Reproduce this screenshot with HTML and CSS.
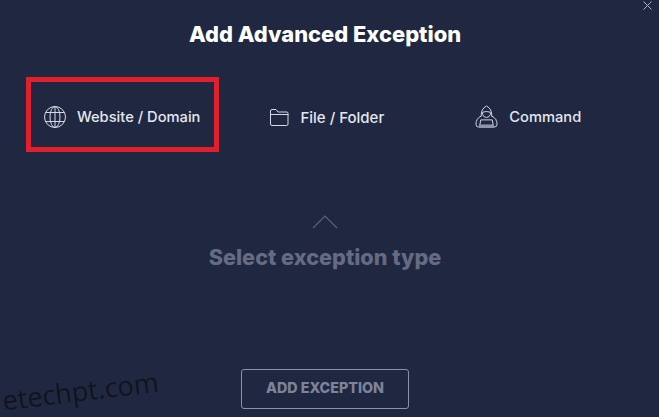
FILE: index.html
```html
<!DOCTYPE html>
<html lang="en">
<head>
    <meta charset="UTF-8">
    <meta name="viewport" content="width=device-width, initial-scale=1.0">
    <title>Add Advanced Exception</title>
    <link rel="stylesheet" href="styles.css">
</head>
<body>
    <div class="dialog">
        <svg class="close" width="9" height="9" viewBox="0 0 9 9">
            <path d="M.5.5l8 8M8.5.5l-8 8" />
        </svg>

        <h1 class="title">Add Advanced Exception</h1>

        <div class="tabs">
            <div class="tab tab-site">
                <svg width="22" height="22" viewBox="0 0 22 22">
                    <circle cx="11" cy="11" r="10.500" />
                    <ellipse cx="11" cy="11" rx="5" ry="10.500" />
                    <path d="M11 .5v21M1.800 6.500h18.400M1.800 15.500h18.400" />
                </svg>
                <span>Website / Domain</span>
            </div>
            <div class="tab tab-file">
                <svg width="19" height="17" viewBox="0 0 19 17">
                    <path d="M.5 15V2q0-1.500 1.500-1.500h4l2 2.500h9q1 0 1 1.500V15q0 1.500-1.500 1.500H2Q.5 16.500.5 15z" />
                    <path d="M.5 5.500h18" />
                </svg>
                <span>File / Folder</span>
            </div>
            <div class="tab tab-cmd">
                <svg width="23" height="24" viewBox="0 0 24 25">
                    <path d="M6.500 12Q6 4 12 1q6 3 5.500 11" />
                    <path d="M8 7.500q4-1.500 8 0v2.500q-1 3-4 3t-4-3z" />
                    <path d="M6.500 11.500Q1 14 1 20q0 3 3 3M17.500 11.500Q23 14 23 20q0 3-3 3" />
                    <path d="M6 15.500h12l1 5.500H5z" />
                    <path class="base" d="M4 21h16v3H4z" />
                </svg>
                <span>Command</span>
            </div>
        </div>

        <div class="highlight"></div>

        <div class="empty">
            <svg width="26" height="14" viewBox="0 0 26 14">
                <path d="M1 13L13 1l12 12" />
            </svg>
            <p>Select exception type</p>
        </div>

        <button class="add-btn">ADD EXCEPTION</button>

        <div class="watermark">etechpt.com</div>
    </div>
</body>
</html>
```

FILE: styles.css
```css
* {
    margin: 0;
    padding: 0;
    box-sizing: border-box;
    font-family: Inter, 'Liberation Sans', sans-serif;
}

body {
    background: #1f2840;
    width: 659px;
    height: 417px;
    overflow: hidden;
}

.dialog {
    position: relative;
    height: 417px;
    display: flex;
    flex-direction: column;
    align-items: center;
    padding: 21px 9px 0 0;
}

.close {
    position: absolute;
    top: 1px;
    right: 7px;
    fill: none;
    stroke: #aab2cc;
    stroke-width: 1;
}

.title {
    font-size: 21.900px;
    line-height: 26px;
    font-weight: 800;
    color: #fff;
}

.tabs {
    width: 100%;
    display: flex;
    align-items: center;
    height: 26px;
    margin-top: 57px;
    padding-left: 44px;
}

.tab {
    display: flex;
    align-items: center;
    gap: 11px;
    color: #e4e7f0;
    font-size: 14.700px;
    font-weight: 500;
}

.tab svg {
    fill: none;
    stroke: #d5d9e6;
    stroke-width: 1;
}

.tab svg .base {
    fill: #9096aa;
    stroke: none;
}

.tab-file {
    margin-left: 70px;
}

.tab-file span {
    font-size: 15px;
}

.tab-cmd {
    margin-left: 91px;
}

.highlight {
    position: absolute;
    left: 26px;
    top: 77px;
    width: 193px;
    height: 75px;
    border: 5px solid #e0202c;
}

.empty {
    margin-top: 85px;
    display: flex;
    flex-direction: column;
    align-items: center;
    gap: 15px;
}

.empty svg {
    fill: none;
    stroke: #5a6178;
    stroke-width: 1.2;
}

.empty p {
    font-size: 21.700px;
    line-height: 26px;
    font-weight: 800;
    color: #646b82;
}

.add-btn {
    position: absolute;
    left: 241px;
    top: 369px;
    width: 168px;
    height: 40px;
    padding-bottom: 3px;
    background: transparent;
    border: 1px solid #8a91a8;
    border-radius: 3px;
    color: #7d8399;
    font-size: 14.300px;
    font-weight: 800;
}

.watermark {
    position: absolute;
    left: 2px;
    top: 373px;
    font-family: 'Open Sans', sans-serif;
    font-size: 27px;
    line-height: 36px;
    color: #10141f;
    transform: rotate(-7deg);
}
```
